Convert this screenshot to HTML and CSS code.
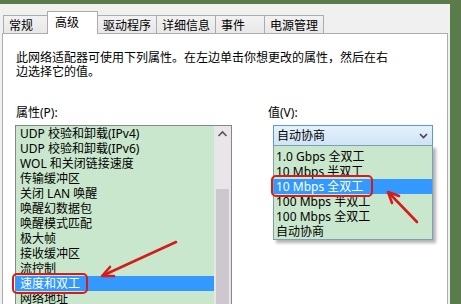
FILE: index.html
```html
<!DOCTYPE html>
<html lang="zh-CN">
<head>
<meta charset="UTF-8">
<title>属性 - 高级</title>
<link rel="stylesheet" href="styles.css">
</head>
<body>

<div class="window">
  <div class="tabs">
    <div class="tab">常规</div>
    <div class="tab tab-active">高级</div>
    <div class="tab">驱动程序</div>
    <div class="tab">详细信息</div>
    <div class="tab tab-wide">事件</div>
    <div class="tab">电源管理</div>
  </div>

  <div class="panel">
    <p class="intro">此网络适配器可使用下列属性。在左边单击你想更改的属性，然后在右<br>边选择它的值。</p>

    <div class="columns">
      <!-- property list -->
      <div class="col-left">
        <div class="label">属性(P):</div>
        <div class="listbox">
          <ul class="items">
            <li>UDP 校验和卸载(IPv4)</li>
            <li>UDP 校验和卸载(IPv6)</li>
            <li>WOL 和关闭链接速度</li>
            <li>传输缓冲区</li>
            <li>关闭 LAN 唤醒</li>
            <li>唤醒幻数据包</li>
            <li>唤醒模式匹配</li>
            <li>极大帧</li>
            <li>接收缓冲区</li>
            <li>流控制</li>
            <li class="selected">速度和双工</li>
            <li>网络地址</li>
          </ul>
          <div class="scrollbar">
            <div class="scroll-up">
              <svg width="17" height="17" viewBox="0 0 17 17"><path d="M4.5 10 L8.5 6 L12.5 10" fill="none" stroke="#555" stroke-width="1.6"/></svg>
            </div>
            <div class="thumb"></div>
          </div>
        </div>
      </div>

      <!-- value combo -->
      <div class="col-right">
        <div class="label">值(V):</div>
        <div class="combo">
          <span class="combo-text">自动协商</span>
          <svg class="combo-arrow" width="9" height="6" viewBox="0 0 9 6"><path d="M1 1 L4.5 4.5 L8 1" fill="none" stroke="#444" stroke-width="1.6"/></svg>
          <ul class="dropdown">
            <li>1.0 Gbps 全双工</li>
            <li>10 Mbps 半双工</li>
            <li class="selected">10 Mbps 全双工</li>
            <li>100 Mbps 半双工</li>
            <li>100 Mbps 全双工</li>
            <li>自动协商</li>
          </ul>
        </div>
      </div>
    </div>
  </div>
</div>

<!-- red markup drawn over the screenshot -->
<svg class="marks" width="461" height="304" viewBox="0 0 461 304">
  <g fill="none" stroke="#d41c1c" stroke-width="2" stroke-linecap="round" stroke-linejoin="round">
    <rect x="13" y="274" width="74" height="19" rx="4"/>
    <rect x="272" y="176" width="100" height="20" rx="4"/>
  </g>
  <g fill="none" stroke="#d41c1c" stroke-width="2.6" stroke-linecap="round" stroke-linejoin="round">
    <line x1="176" y1="242" x2="104" y2="275"/>
    <polyline points="114,276 102,276 110,267"/>
    <line x1="417" y1="222" x2="390" y2="194"/>
    <polyline points="392,203 388,192 399,196"/>
  </g>
</svg>

</body>
</html>
```

FILE: styles.css
```css
body, html {
  margin: 0;
  height: 100%;
  overflow: hidden;
  background: #5a7c4a;
  font-family: "Noto Sans", "Noto Sans CJK SC", sans-serif;
  font-size: 12px;
  color: #000;
}

.window {
  margin-top: 4px;
  width: 450px;
  height: 300px;
  background: #f0f0f0;
  overflow: hidden;
}

/* tab strip */
.tabs {
  display: flex;
  align-items: flex-end;
  height: 29px;
  padding-left: 3px;
}

.tab {
  box-sizing: border-box;
  height: 18px;
  min-width: 46px;
  padding: 0 5px;
  margin-right: -1px;
  border: 1px solid #acacac;
  border-bottom: none;
  background: linear-gradient(#f2f2f2, #e8e8e8);
  line-height: 17px;
  font-family: "Noto Sans CJK SC", sans-serif;
  white-space: nowrap;
}

.tab-wide {
  min-width: 50px;
}

.tab-active {
  position: relative;
  z-index: 1;
  height: 23px;
  width: 51px;
  margin: 0 -1px -1px -1px;
  padding-left: 7px;
  background: #fff;
  line-height: 20px;
}

/* white page under the tabs */
.panel {
  box-sizing: border-box;
  width: 446px;
  height: 280px;
  margin-left: 2px;
  padding: 16px 0 0 13px;
  background: #fff;
  border: 1px solid #adadad;
}

.intro {
  margin: 0;
  line-height: 14px;
  font-family: "Noto Sans CJK SC", sans-serif;
  white-space: nowrap;
}

.columns {
  display: flex;
  gap: 35px;
  margin-top: 28px;
  margin-left: -1px;
}

.label {
  height: 14px;
  line-height: 14px;
  padding-left: 1px;
}

.col-left {
  width: 217px;
}

.col-right {
  width: 166px;
}

/* left list box */
.listbox {
  display: flex;
  box-sizing: border-box;
  height: 200px;
  margin-top: 5px;
  border: 1px solid #828790;
  background: #c9e7cc;
}

.items, .dropdown {
  list-style: none;
  margin: 0;
  padding: 0;
}

.items {
  flex: 1;
}

.items li, .dropdown li {
  height: 15px;
  line-height: 15px;
  padding-left: 4px;
  white-space: nowrap;
}

.items li.selected, .dropdown li.selected {
  background: #3399ff;
  color: #fff;
}

.scrollbar {
  width: 17px;
  background: #e9e5e9;
}

.scroll-up {
  height: 17px;
}

.thumb {
  height: 140px;
  margin: 46px 2px 0 2px;
  background: #cdc8cd;
}

/* value combo box with its open drop-down */
.combo {
  position: relative;
  box-sizing: border-box;
  display: flex;
  align-items: center;
  justify-content: space-between;
  width: 160px;
  height: 21px;
  margin: 5px 0 0 6px;
  padding: 0 4px 0 3px;
  border: 1px solid #5a9ad6;
  background: linear-gradient(#e4f1fb, #cfe4f6);
}

.combo-text {
  line-height: 19px;
}

.dropdown {
  position: absolute;
  top: 100%;
  left: -1px;
  box-sizing: border-box;
  width: 160px;
  padding-top: 3px;
  border: 1px solid #7f9db9;
  background: #c9e7cc;
  box-shadow: 3px 3px 3px rgba(0, 0, 0, 0.3);
}

.dropdown li {
  padding-left: 2px;
}

.marks {
  position: absolute;
  left: 0;
  top: 0;
  pointer-events: none;
}
```
